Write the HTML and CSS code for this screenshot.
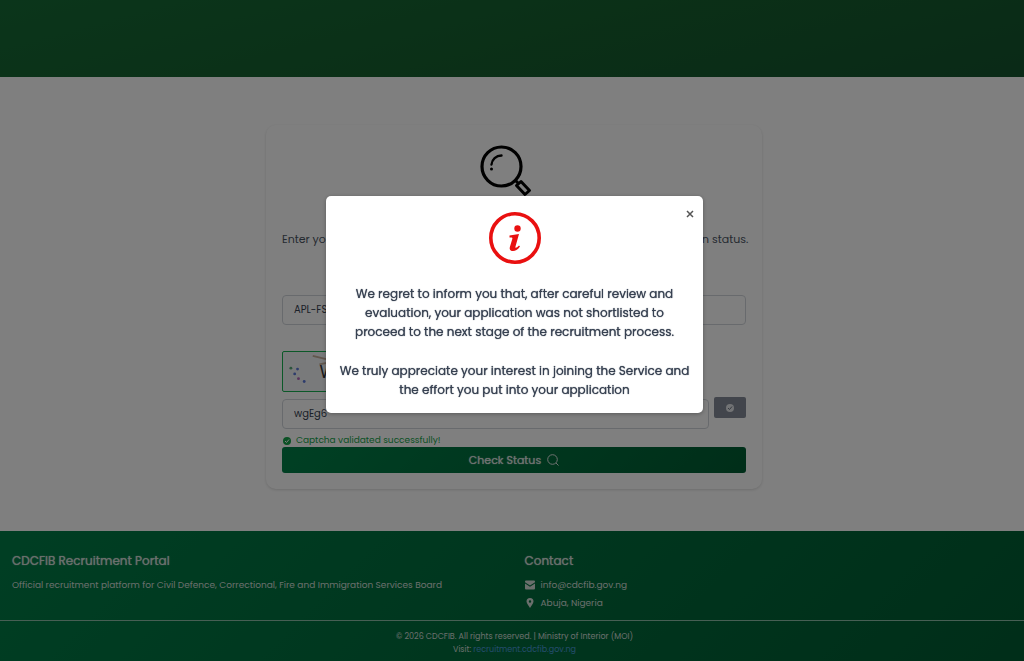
FILE: index.html
```html
<!DOCTYPE html>
<html lang="en">
<head>
    <meta charset="UTF-8">
    <meta name="viewport" content="width=device-width, initial-scale=1.0">
    <title>CDCFIB Recruitment Portal</title>
    <link rel="stylesheet" href="styles.css">
</head>
<body>

<header class="site-header"></header>

<main class="main">
    <form class="card">
        <svg class="card-icon" viewBox="0 0 68 52" fill="none" stroke="#000">
            <circle cx="21.500" cy="21.500" r="19.500" stroke-width="3.200"/>
            <path d="M11.500 19.500C12 14.500 16 10.500 21.500 10.500" stroke-width="2.400" stroke-linecap="round"/>
            <circle cx="11.500" cy="24" r="1.500" fill="#000" stroke="none"/>
            <path d="M35 35l3 3" stroke-width="3"/>
            <path d="M36.500 40.500L41 36.500L49.500 45.500L45 49.500Z" stroke-width="3" stroke-linejoin="round"/>
        </svg>
        <p class="intro">Enter your Application ID and the Captcha code below to see your application status.</p>
        <input class="field" type="text" aria-label="Application ID" value="APL-FS">
        <svg class="captcha" viewBox="0 0 130 41">
            <path d="M29 4L70 14M36 13L80 4" stroke="#c4ae9b" stroke-width="2" fill="none"/>
            <g fill="#5b79d8">
                <circle cx="13" cy="18" r="1.500"/>
                <circle cx="10" cy="23" r="1.500"/>
                <circle cx="20" cy="31" r="1.500"/>
            </g>
            <circle cx="6" cy="17" r="1.500" fill="#56a878"/>
            <circle cx="14" cy="28" r="1.500" fill="#b266b8"/>
            <text class="captcha-text" x="36" y="27">W</text>
        </svg>
        <div class="captcha-row">
            <input class="field" type="text" aria-label="Captcha" value="wgEg6">
            <button class="verify" type="button" aria-label="Verify captcha">
                <svg class="icon-small" viewBox="0 0 16 16"><circle cx="8" cy="8" r="8" fill="#e5e7eb"/><path d="M4 8l3 3 5-6" fill="none" stroke="#6b7280" stroke-width="2"/></svg>
            </button>
        </div>
        <p class="valid">
            <svg class="icon-small" viewBox="0 0 16 16"><circle cx="8" cy="8" r="8" fill="#16a34a"/><path d="M4 8l3 3 5-6" fill="none" stroke="#fff" stroke-width="2"/></svg>
            Captcha validated successfully!
        </p>
        <button class="submit" type="submit">
            Check Status
            <svg class="icon-search" viewBox="0 0 12 12" fill="none" stroke="currentColor"><circle cx="5.500" cy="5.500" r="4.800"/><path d="M9 9l2.500 2.500"/></svg>
        </button>
    </form>
</main>

<footer class="site-footer">
    <div class="footer-columns">
        <section>
            <h2>CDCFIB Recruitment Portal</h2>
            <p>Official recruitment platform for Civil Defence, Correctional, Fire and Immigration Services Board</p>
        </section>
        <section>
            <h2>Contact</h2>
            <p class="contact">
                <svg class="icon-contact" viewBox="0 0 10 10" fill="currentColor"><path d="M0 1.500Q0 .5 1 .5H9Q10 .5 10 1.500V2.300L5 5.500L0 2.300Z"/><path d="M0 3.600L5 6.800L10 3.600V8.500Q10 9.500 9 9.500H1Q0 9.500 0 8.500Z"/></svg>
                info@cdcfib.gov.ng
            </p>
            <p class="contact">
                <svg class="icon-contact" viewBox="0 0 10 10" fill="currentColor"><path fill-rule="evenodd" d="M5 10C4 8 1.500 5.500 1.500 3.500A3.500 3.500 0 0 1 8.500 3.500C8.500 5.500 6 8 5 10ZM5 2.300A1.200 1.200 0 1 0 5 4.700A1.200 1.200 0 1 0 5 2.300Z"/></svg>
                Abuja, Nigeria
            </p>
        </section>
    </div>
    <div class="copyright">
        <p>© 2026 CDCFIB. All rights reserved. | Ministry of Interior (MOI)</p>
        <p>Visit: <a href="#">recruitment.cdcfib.gov.ng</a></p>
    </div>
</footer>

<div class="overlay">
    <div class="modal" role="dialog" aria-modal="true" aria-label="Application status">
        <button class="close" type="button" aria-label="Close">
            <svg viewBox="0 0 8 8" fill="none" stroke="currentColor" stroke-width="1.500"><path d="M1 1l6 6M7 1l-6 6"/></svg>
        </button>
        <svg class="modal-icon" viewBox="0 0 52 52">
            <circle cx="26" cy="26" r="24.200" fill="none" stroke="#e91010" stroke-width="3.600"/>
            <circle cx="28.500" cy="16.500" r="3.200" fill="#e91010"/>
            <path d="M20.500 23.500L30 22L26.500 34.500C26 36.500 27.500 36 30 33.500L31 34.500C28.500 38 26.500 39 24 39C21 39 20.200 37.200 21 34.500L23.300 27C23.700 25.500 23 25.300 20.500 25.500Z" fill="#e91010"/>
        </svg>
        <p>We regret to inform you that, after careful review and evaluation, your application was not shortlisted to<br>proceed to the next stage of the recruitment process.</p>
        <p>We truly appreciate your interest in joining the Service and the effort you put into your application</p>
    </div>
</div>

</body>
</html>
```
FILE: styles.css
```css
* {
    box-sizing: border-box;
}
body {
    margin: 0;
    min-height: 100vh;
    display: flex;
    flex-direction: column;
    font-family: Poppins, Inter, sans-serif;
    font-size: 11px;
    color: #4b5563;
    background: #fff;
}
h2, p {
    margin: 0;
}
svg {
    display: block;
    flex: none;
}
.site-header {
    height: 77px;
    background: linear-gradient(165deg, #166b36, #16602f 50%, #14542f);
}
.main {
    flex: 1;
    display: flex;
    justify-content: center;
    align-items: flex-start;
    padding: 48px 0 42px 4px;
}
.card {
    width: 496px;
    max-width: 100%;
    display: flex;
    flex-direction: column;
    padding: 20px 16px 16px;
    border-radius: 10px;
    box-shadow: 0 1px 3px rgba(0, 0, 0, 0.15);
}
.card-icon {
    width: 68px;
    height: 52px;
    align-self: center;
    margin-bottom: 33px;
}
.intro {
    line-height: 18px;
    margin-bottom: 47px;
    text-align: center;
    white-space: nowrap;
}
.field {
    width: 100%;
    height: 30px;
    padding: 0 11px;
    border: 1px solid #d1d5db;
    border-radius: 4px;
    font: inherit;
    font-size: 10px;
    color: #374151;
    background: #fff;
}
.captcha {
    width: 130px;
    height: 41px;
    margin: 26px 0 5px;
    border: 1px solid #16b050;
    border-radius: 2px;
    background: #f3f4f6;
}
.captcha-text {
    font-size: 18px;
    fill: #333;
}
.captcha-row {
    display: flex;
    gap: 5px;
}
.captcha-row .field {
    margin-top: 2px;
}
.verify {
    width: 32px;
    height: 21px;
    flex: none;
    display: grid;
    place-items: center;
    padding: 0;
    border: none;
    border-radius: 2px;
    background: #858b98;
}
.icon-small {
    width: 8px;
    height: 8px;
}
.valid {
    display: flex;
    align-items: center;
    gap: 5px;
    height: 18px;
    padding: 5px 1px 0;
    font-size: 9px;
    color: #16a34a;
}
.submit {
    display: flex;
    justify-content: center;
    align-items: center;
    gap: 6px;
    height: 26px;
    border: none;
    border-radius: 3px;
    font: inherit;
    text-shadow: 0 0 1px currentColor;
    color: #dde3e0;
    background: linear-gradient(135deg, #008048, #005c32);
}
.icon-search {
    width: 12px;
    height: 12px;
}
.site-footer {
    color: #d4ded9;
    font-size: 9px;
    background: linear-gradient(135deg, #007d47, #005c32);
}
.footer-columns {
    display: grid;
    grid-template-columns: 1fr 1fr;
    gap: 25px;
    padding: 20px 12px 8px;
    line-height: 18px;
}
h2 {
    margin-bottom: 5px;
    font-size: 12px;
    font-weight: 400;
    line-height: 20px;
    text-shadow: 0 0 1px currentColor;
}
.contact {
    display: flex;
    align-items: center;
    gap: 6px;
}
.icon-contact {
    width: 10px;
    height: 10px;
}
.copyright {
    padding: 9px 0 6px 5px;
    border-top: 1px solid #8fbfa8;
    font-size: 8px;
    line-height: 13px;
    text-align: center;
}
.copyright a {
    color: #4a9ad8;
    text-decoration: none;
}
.overlay {
    position: fixed;
    inset: 0;
    display: flex;
    justify-content: center;
    align-items: flex-start;
    padding: 196px 0 0 5px;
    background: rgba(0, 0, 0, 0.5);
}
.modal {
    position: relative;
    width: 377px;
    padding: 16px 12px 14px;
    border-radius: 5px;
    font-size: 12px;
    line-height: 19px;
    text-align: center;
    color: #374151;
    text-shadow: 0 0 1px currentColor;
    background: #fff;
    box-shadow: 0 1px 4px rgba(0, 0, 0, 0.3);
}
.modal p + p {
    margin-top: 20px;
}
.modal-icon {
    width: 52px;
    height: 52px;
    margin: 0 auto 20px;
}
.close {
    position: absolute;
    top: 14px;
    right: 9px;
    width: 8px;
    height: 8px;
    padding: 0;
    border: none;
    color: #555;
    background: none;
}
```
